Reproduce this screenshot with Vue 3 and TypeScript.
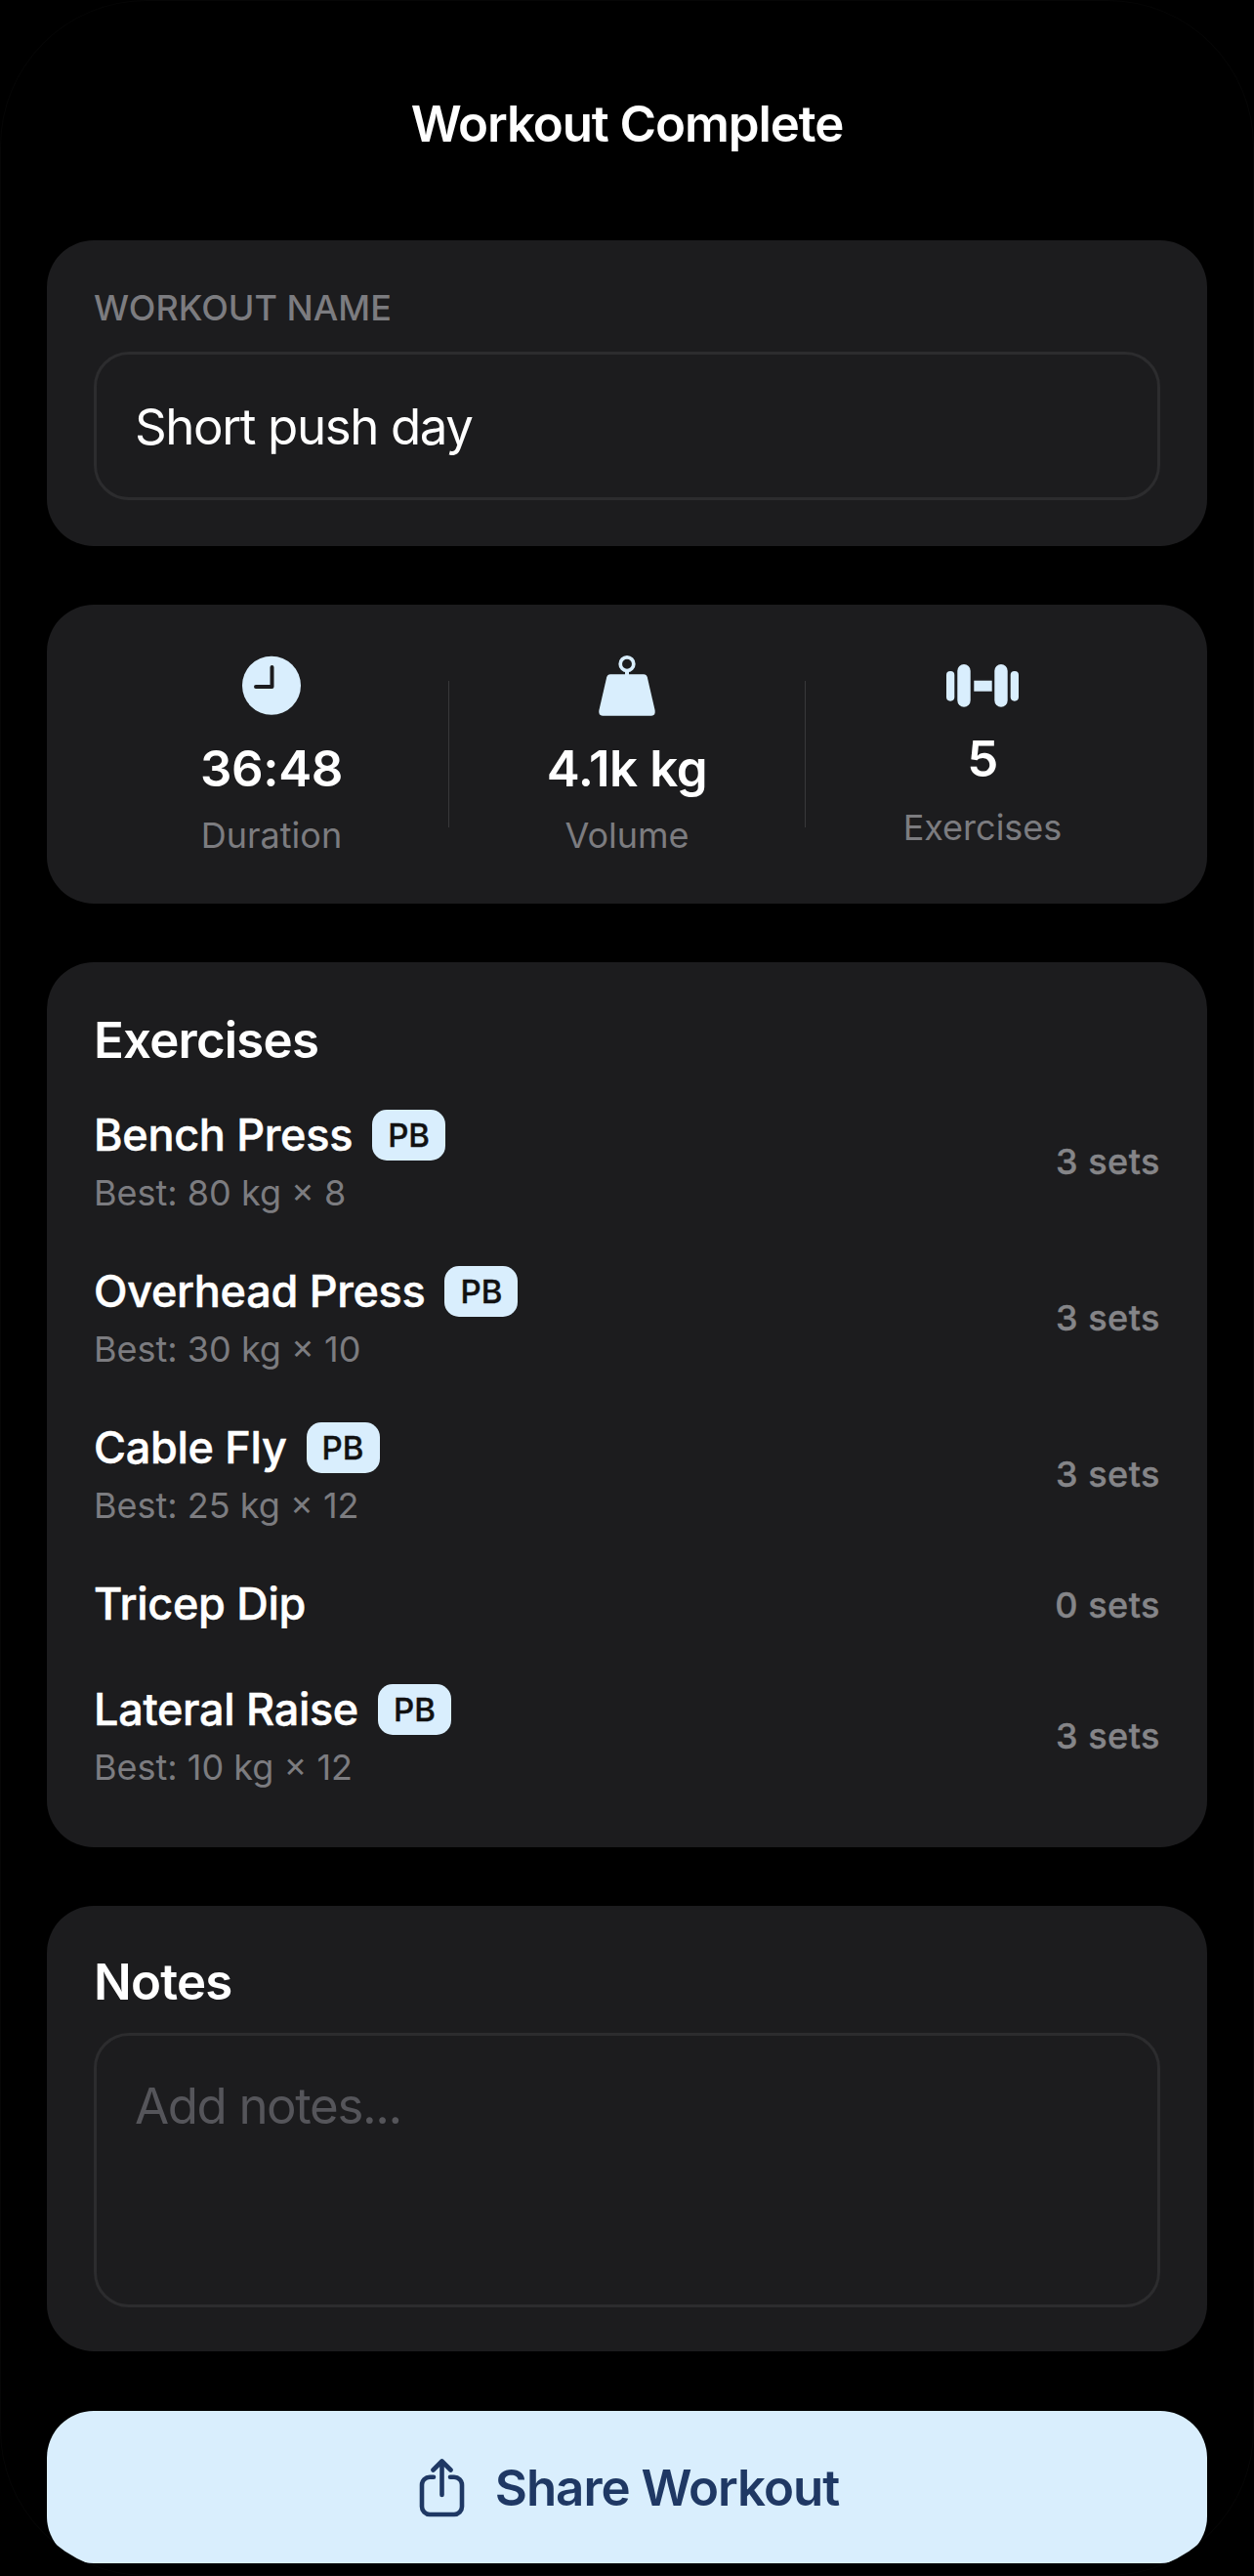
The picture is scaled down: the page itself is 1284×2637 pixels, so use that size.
<script setup lang="ts">
interface Exercise {
  name: string
  best?: string
  sets: number
}

const exercises: Exercise[] = [
  { name: 'Bench Press', best: 'Best: 80 kg × 8', sets: 3 },
  { name: 'Overhead Press', best: 'Best: 30 kg × 10', sets: 3 },
  { name: 'Cable Fly', best: 'Best: 25 kg × 12', sets: 3 },
  { name: 'Tricep Dip', sets: 0 },
  { name: 'Lateral Raise', best: 'Best: 10 kg × 12', sets: 3 },
]
</script>

<template>
  <main class="screen">
    <h1 class="title">Workout Complete</h1>

    <section class="card name-card">
      <label class="label" for="workout-name">WORKOUT NAME</label>
      <input id="workout-name" class="field name-input" value="Short push day" />
    </section>

    <section class="card stats">
      <div class="stat">
        <svg class="stat-icon" width="60" height="64" viewBox="0 0 60 64">
          <circle cx="30" cy="31.7" r="30" fill="#d9eefd" />
          <path d="M30.5 13V33H14" fill="none" stroke="#1c1c1e" stroke-width="4" stroke-linecap="round" stroke-linejoin="round" />
        </svg>
        <div class="stat-value">36:48</div>
        <div class="stat-label">Duration</div>
      </div>
      <div class="stat">
        <svg class="stat-icon" width="60" height="64" viewBox="0 0 60 64">
          <circle cx="30" cy="9.7" r="6.8" fill="none" stroke="#d9eefd" stroke-width="3.7" />
          <path d="M28 15h4v6h-4z" fill="#d9eefd" />
          <path d="M13 20.3H47Q50 20.3 50.8 23.3L58.6 57Q59.6 62.7 55 62.7H5Q0.4 62.7 1.4 57L9.2 23.3Q10 20.3 13 20.3Z" fill="#d9eefd" />
        </svg>
        <div class="stat-value">4.1k kg</div>
        <div class="stat-label">Volume</div>
      </div>
      <div class="stat stat-last">
        <svg class="stat-icon" width="92" height="64" viewBox="0 0 92 64" fill="#d9eefd">
          <rect x="9" y="17" width="8.3" height="30.7" rx="4.1" />
          <rect x="20.3" y="10" width="13.4" height="43.7" rx="6.7" />
          <rect x="37.3" y="26.7" width="18.4" height="11" />
          <rect x="58.3" y="10" width="13.4" height="43.7" rx="6.7" />
          <rect x="74.7" y="17" width="8.3" height="30.7" rx="4.1" />
        </svg>
        <div class="stat-value">5</div>
        <div class="stat-label">Exercises</div>
      </div>
    </section>

    <section class="card exercises">
      <h2 class="card-title">Exercises</h2>
      <div class="rows">
        <div v-for="ex in exercises" :key="ex.name" class="row">
          <div class="row-main">
            <div class="row-head">
              <span class="row-name">{{ ex.name }}</span>
              <span v-if="ex.best" class="pb">PB</span>
            </div>
            <div v-if="ex.best" class="row-best">{{ ex.best }}</div>
          </div>
          <span class="row-sets">{{ ex.sets }} sets</span>
        </div>
      </div>
    </section>

    <section class="card notes">
      <h2 class="card-title">Notes</h2>
      <textarea class="field notes-input" placeholder="Add notes..."></textarea>
    </section>

    <button class="share" type="button">
      <svg width="47" height="64" viewBox="0 0 47 64" fill="none" stroke="#1f3864" stroke-width="4.6" stroke-linecap="round" stroke-linejoin="round">
        <path d="M15 21.7H11a8 8 0 0 0-8 8V52a8 8 0 0 0 8 8H36a8 8 0 0 0 8-8V29.7a8 8 0 0 0-8-8H32" />
        <path d="M23.5 40V5.5M14.5 14.5L23.5 5.5L32.5 14.5" />
      </svg>
      Share Workout
    </button>
  </main>
</template>

<style>
html,
body {
  margin: 0;
  background: #000;
}
</style>

<style scoped>
.screen {
  width: 1284px;
  height: 2637px;
  box-sizing: border-box;
  padding: 96px 48px 0;
  background: #000;
  color: #fff;
  font-family: Inter, "Noto Sans", sans-serif;
  overflow: hidden;
  border-radius: 150px;
  box-shadow: inset 0 0 0 1px #060606;
}

.title {
  margin: 0 0 89px;
  font-size: 51px;
  line-height: 61px;
  font-weight: 600;
  text-align: center;
  letter-spacing: -1.1px;
}

.card {
  background: #1c1c1e;
  border-radius: 48px;
  margin-bottom: 60px;
  box-sizing: border-box;
}

.name-card {
  height: 313px;
  padding: 48px 48px 0;
}

.label {
  display: block;
  margin-bottom: 24px;
  font-size: 36px;
  line-height: 42px;
  font-weight: 500;
  color: #7c7c80;
}

.field {
  display: block;
  width: 100%;
  box-sizing: border-box;
  background: transparent;
  border: 3px solid #2c2c2e;
  border-radius: 36px;
  outline: none;
  color: #fff;
  font-family: inherit;
  font-size: 51px;
  padding: 0 39px;
  letter-spacing: -1.4px;
}

.name-input {
  height: 152px;
}

.stats {
  height: 306px;
  padding: 0 48px;
  display: flex;
}

.stat {
  position: relative;
  flex: 1;
  display: flex;
  flex-direction: column;
  align-items: center;
  padding-top: 51px;
}

.stat:not(.stat-last)::after {
  content: '';
  position: absolute;
  right: 0;
  top: 78px;
  height: 150px;
  width: 1px;
  background: #38383a;
}

.stat:nth-child(2)::after {
  right: -1px;
}

.stat-value {
  margin-top: 22px;
  font-size: 51px;
  line-height: 62px;
  font-weight: 600;
  letter-spacing: -0.4px;
}

.stat-label {
  margin-top: 15px;
  font-size: 36px;
  line-height: 44px;
  color: #7c7c80;
}

.stat-last .stat-value {
  margin-top: 12px;
}

.stat-last .stat-label {
  margin-top: 17px;
}

.exercises {
  height: 906px;
  padding: 49px 48px 0;
}

.card-title {
  margin: 0;
  font-size: 51px;
  line-height: 62px;
  font-weight: 600;
  letter-spacing: -0.8px;
}

.rows {
  margin-top: 36px;
  display: flex;
  flex-direction: column;
  gap: 48px;
}

.row {
  display: flex;
  align-items: center;
  justify-content: space-between;
}

.row-head {
  display: flex;
  align-items: center;
  gap: 20px;
  height: 60px;
}

.row-name {
  font-size: 45px;
  line-height: 60px;
  font-weight: 500;
  letter-spacing: -0.3px;
  -webkit-text-stroke: 0.5px #fff;
}

.pb {
  width: 75px;
  height: 52px;
  line-height: 52px;
  border-radius: 15px;
  background: #d9eefd;
  color: #111;
  text-align: center;
  font-size: 33px;
  font-weight: 500;
  -webkit-text-stroke: 0.4px #111;
}

.row-best {
  margin-top: 6px;
  font-size: 36px;
  line-height: 46px;
  color: #7c7c80;
}

.row-sets {
  padding-top: 2px;
  font-size: 36px;
  font-weight: 500;
  letter-spacing: 0.5px;
  color: #858588;
  -webkit-text-stroke: 0.4px #858588;
}

.notes {
  height: 456px;
  padding: 47px 48px 0;
  margin-bottom: 61px;
}

.notes-input {
  margin-top: 21px;
  height: 281px;
  padding-top: 41px;
  resize: none;
}

.notes-input::placeholder {
  color: #55555a;
  opacity: 1;
}

.share {
  width: 100%;
  height: 156px;
  border: none;
  border-radius: 48px;
  padding: 0 0 0 4px;
  background: #d9eefd;
  color: #1f3864;
  font-family: inherit;
  font-size: 51px;
  font-weight: 600;
  letter-spacing: -1px;
  display: flex;
  align-items: center;
  justify-content: center;
  gap: 31px;
}
</style>
